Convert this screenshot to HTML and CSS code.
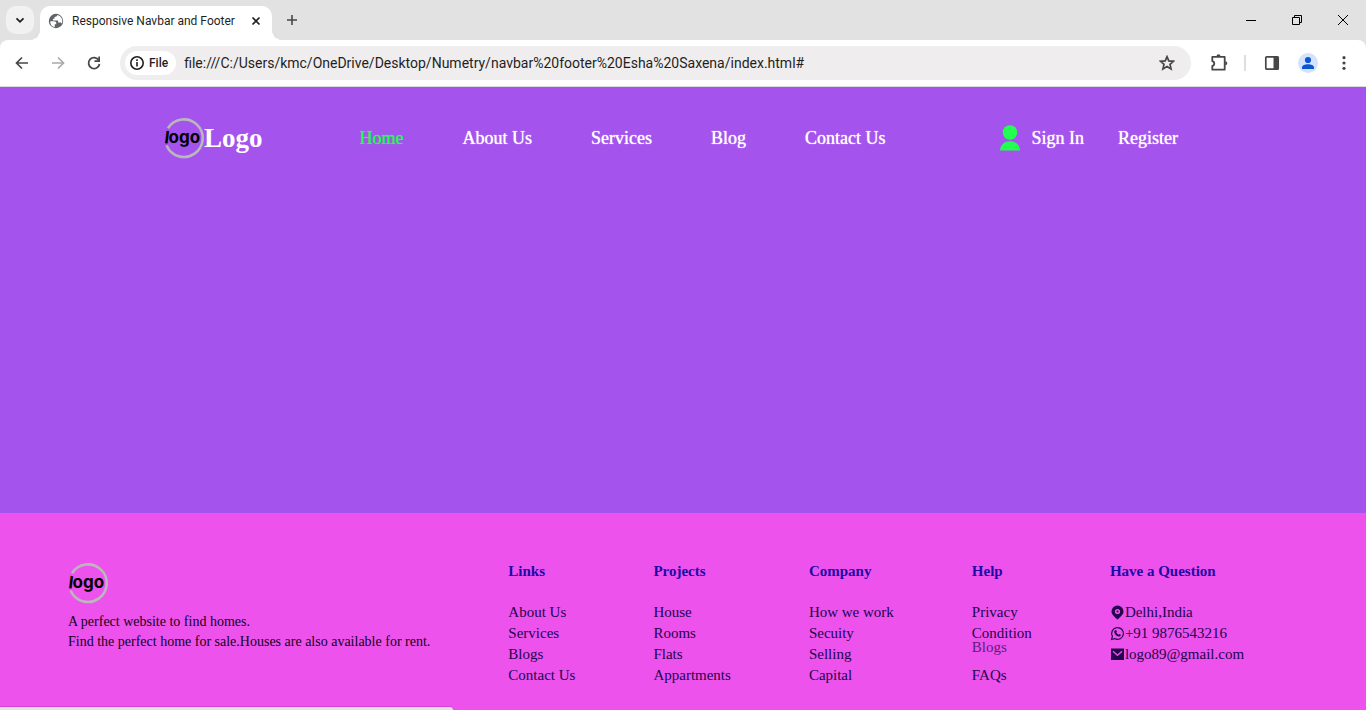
FILE: index.html
```html
<!DOCTYPE html>
<html lang="en">
<head>
<meta charset="utf-8">
<title>Responsive Navbar and Footer</title>
<link rel="stylesheet" href="styles.css">
</head>
<body>
<div class="tabstrip">
  <button class="tab-search" aria-label="Search tabs"><svg width="16" height="16" viewBox="0 0 16 16"><path d="M4.500 6.300 8 9.800l3.500-3.500" fill="none" stroke="#1f1f1f" stroke-width="1.800"/></svg></button>
  <div class="tab">
    <svg width="16" height="16" viewBox="0 0 16 16"><circle cx="8" cy="8" r="7.200" fill="#5f6368"/><path d="M2.300 8.300h3.400c1.800 0 2.600.9 2.600 2.200v.8H6.700v2.900C3.800 13.600 2 11 2.300 8.300zM9.300 2c-.3 1.700-1.300 1.800-2.800 1.900v1.900H4.900v1.700h5.200v2.100h2.100c1 0 1.300.5 1.400 1.200A6.100 6.100 0 0 0 9.300 2z" fill="#fff"/></svg>
    <span class="tab-title">Responsive Navbar and Footer</span>
    <button class="icon-btn tab-close" aria-label="Close tab"><svg width="16" height="16" viewBox="0 0 16 16"><path d="m4.500 4.500 7 7m0-7-7 7" stroke="#1f1f1f" stroke-width="1.700"/></svg></button>
  </div>
  <button class="icon-btn new-tab" aria-label="New tab"><svg width="16" height="16" viewBox="0 0 16 16"><path d="M8 3v10M3 8h10" stroke="#474747" stroke-width="1.600"/></svg></button>
  <div class="window-controls">
    <button class="icon-btn" aria-label="Minimize"><svg width="12" height="12" viewBox="0 0 12 12"><path d="M1 6.500h10" stroke="#000"/></svg></button>
    <button class="icon-btn" aria-label="Restore"><svg width="12" height="12" viewBox="0 0 12 12"><path d="M1.500 3.500h7v7h-7zM3.500 3.500v-2h7v7h-2" fill="none" stroke="#000"/></svg></button>
    <button class="icon-btn" aria-label="Close"><svg width="12" height="12" viewBox="0 0 12 12"><path d="m1 1 10 10M11 1 1 11" stroke="#000"/></svg></button>
  </div>
</div>

<div class="toolbar">
  <div class="history">
    <button class="icon-btn" aria-label="Back"><svg width="16" height="16" viewBox="0 0 16 16"><path d="M14 8H3.500M8 2.500 2.500 8 8 13.500" fill="none" stroke="#474747" stroke-width="1.700"/></svg></button>
    <button class="icon-btn" aria-label="Forward"><svg width="16" height="16" viewBox="0 0 16 16"><path d="M2 8h10.500M8 2.500 13.500 8 8 13.500" fill="none" stroke="#ababab" stroke-width="1.700"/></svg></button>
    <button class="icon-btn" aria-label="Reload"><svg width="16" height="16" viewBox="0 0 16 16"><path d="M12.800 5.200A5.500 5.500 0 1 0 13.500 9" fill="none" stroke="#474747" stroke-width="1.800"/><path d="M14 1.500V7H8.500V5.300h3.800V1.500z" fill="#474747"/></svg></button>
  </div>
  <div class="omnibox">
    <button class="file-chip"><svg width="16" height="16" viewBox="0 0 16 16"><circle cx="8" cy="8" r="6.200" fill="none" stroke="#1f1f1f" stroke-width="1.600"/><path d="M8 7v4.500M8 4.300v1.600" stroke="#1f1f1f" stroke-width="1.600"/></svg>File</button>
    <input class="url" aria-label="Address" value="file:///C:/Users/kmc/OneDrive/Desktop/Numetry/navbar%20footer%20Esha%20Saxena/index.html#">
    <button class="icon-btn" aria-label="Bookmark"><svg width="16" height="16" viewBox="0 0 16 16"><path d="m8 1.700 1.800 4.200 4.700.4-3.500 3.100 1.100 4.500L8 11.500l-4.100 2.400L5 9.400 1.500 6.300l4.700-.4z" fill="none" stroke="#474747" stroke-width="1.700"/></svg></button>
  </div>
  <div class="actions">
    <button class="icon-btn" aria-label="Extensions"><svg width="20" height="20" viewBox="0 0 20 20"><path d="M3.300 3.900h12.400v12.800H3.300v-3.700c2.600-.5 2.600-4.300 0-4.800z" fill="none" stroke="#474747" stroke-width="1.800" stroke-linejoin="round"/><path d="M7.500 3.300a2 2 0 0 1 4 0zM16.300 8.200a2 2 0 0 1 0 4z" fill="#474747"/></svg></button>
    <span class="divider"></span>
    <button class="icon-btn" aria-label="Side panel"><svg width="16" height="16" viewBox="0 0 16 16"><rect x="1.800" y="1.800" width="12.400" height="12.400" rx="1" fill="none" stroke="#474747" stroke-width="1.700"/><path d="M9.500 1.500h5v13h-5z" fill="#474747"/></svg></button>
    <button class="icon-btn" aria-label="Profile"><svg width="20" height="20" viewBox="0 0 20 20"><circle cx="10" cy="10" r="10" fill="#d3e3fd"/><circle cx="10" cy="7" r="3.100" fill="#0b57d0"/><path d="M4 16v-1.500C4 12.500 7 11.300 10 11.300s6 1.200 6 3.200V16z" fill="#0b57d0"/></svg></button>
    <button class="icon-btn" aria-label="Menu"><svg width="16" height="16" viewBox="0 0 16 16" fill="#474747"><circle cx="8" cy="2.700" r="1.600"/><circle cx="8" cy="8" r="1.600"/><circle cx="8" cy="13.300" r="1.600"/></svg></button>
  </div>
</div>

<div class="page">
  <header class="navbar">
    <a class="brand" href="#">
      <svg class="logo" viewBox="0 0 40 40"><path d="M4 10.200A18.800 18.800 0 1 1 2.600 27.400" fill="none" stroke="#b9b9bb" stroke-width="2.600"/><text class="logo-text" x="0" y="25" rotate="7 0 0 0">logo</text></svg>Logo
    </a>
    <nav class="nav-links">
      <a class="active" href="#">Home</a>
      <a href="#">About Us</a>
      <a href="#">Services</a>
      <a href="#">Blog</a>
      <a href="#">Contact Us</a>
    </nav>
    <div class="account">
      <a class="sign-in" href="#"><svg width="20" height="26" viewBox="0 0 20 26" fill="#22ff50"><circle cx="10" cy="7.500" r="7.300"/><path d="M0 25.500c0-5 4-9.300 10-9.300s10 4.300 10 9.300z"/></svg>Sign In</a>
      <a href="#">Register</a>
    </div>
  </header>

  <footer class="footer">
    <div class="about">
      <svg class="logo" viewBox="0 0 40 40"><path d="M4 10.200A18.800 18.800 0 1 1 2.600 27.400" fill="none" stroke="#b9b9bb" stroke-width="2.600"/><text class="logo-text" x="0" y="25" rotate="7 0 0 0">logo</text></svg>
      <p>A perfect website to find homes.<br>Find the perfect home for sale.Houses are also available for rent.</p>
    </div>
    <section>
      <h4>Links</h4>
      <ul>
        <li><a href="#">About Us</a></li>
        <li><a href="#">Services</a></li>
        <li><a href="#">Blogs</a></li>
        <li><a href="#">Contact Us</a></li>
      </ul>
    </section>
    <section>
      <h4>Projects</h4>
      <ul>
        <li><a href="#">House</a></li>
        <li><a href="#">Rooms</a></li>
        <li><a href="#">Flats</a></li>
        <li><a href="#">Appartments</a></li>
      </ul>
    </section>
    <section>
      <h4>Company</h4>
      <ul>
        <li><a href="#">How we work</a></li>
        <li><a href="#">Secuity</a></li>
        <li><a href="#">Selling</a></li>
        <li><a href="#">Capital</a></li>
      </ul>
    </section>
    <section>
      <h4>Help</h4>
      <ul>
        <li><a href="#">Privacy</a></li>
        <li><a href="#">Condition</a></li>
        <li class="raised"><a href="#">Blogs</a></li>
        <li><a href="#">FAQs</a></li>
      </ul>
    </section>
    <section>
      <h4>Have a Question</h4>
      <ul>
        <li><a class="contact" href="#"><svg width="15" height="15" viewBox="0 0 15 15"><path fill-rule="evenodd" d="M7.500.5a6 6 0 0 1 6 6c0 3.200-3.500 5.700-6 8-2.500-2.300-6-4.800-6-8a6 6 0 0 1 6-6zm0 3.400a2.600 2.600 0 1 0 0 5.200 2.600 2.600 0 0 0 0-5.200z"/><circle cx="7.500" cy="6.500" r="1"/></svg>Delhi,India</a></li>
        <li><a class="contact" href="#"><svg width="15" height="15" viewBox="0 0 15 15"><path d="M1.500 13.500l.9-3.200a5.900 5.900 0 1 1 2.300 2.300z" fill="none" stroke="#23064e" stroke-width="1.200"/><path d="M5.300 4.200l1 .1.600 1.500-.6.800c.5 1 1.200 1.600 2.200 2.100l.8-.8 1.500.8c0 1.200-.8 1.900-1.900 1.800C6.500 10.200 4.500 8.200 4.200 6c0-.9.500-1.600 1.100-1.800z"/></svg>+91 9876543216</a></li>
        <li><a class="contact" href="#"><svg width="15" height="15" viewBox="0 0 15 15"><path d="M1 1.500h13v11.500H1z"/><path d="m3 4.300 4.500 4 4.500-4" fill="none" stroke="#ed52ed" stroke-width="1.400"/></svg>logo89@gmail.com</a></li>
      </ul>
    </section>
  </footer>
  <div class="status-bubble"></div>
</div>
</body>
</html>
```

FILE: styles.css
```css
* { box-sizing: border-box; }
body {
  margin: 0;
  min-height: 100vh;
  display: flex;
  flex-direction: column;
  background: #e2e2e2;
  font-family: "Liberation Serif", "Times New Roman", serif;
}
a { color: inherit; text-decoration: none; }
svg { display: block; flex: none; }
button { font: inherit; border: 0; padding: 0; background: none; }

/* browser window */
.tabstrip, .toolbar {
  display: flex;
  align-items: center;
  font-family: Roboto, "Segoe UI", sans-serif;
  color: #1f1f1f;
}
.icon-btn { display: grid; place-items: center; flex: none; }
.tabstrip { height: 40px; padding-left: 6px; }
.tab-search {
  width: 28px; height: 28px;
  display: grid; place-items: center;
  border-radius: 10px;
  background: #f1f1f1;
}
.tab {
  position: relative;
  display: flex;
  align-items: center;
  align-self: flex-end;
  gap: 8px;
  width: 232px; height: 34px;
  margin-left: 6px;
  padding: 0 8px 5px;
  border-radius: 10px 10px 0 0;
  background: #fff;
}
.tab::before, .tab::after {
  content: "";
  position: absolute;
  bottom: 0;
  width: 10px; height: 10px;
}
.tab::before { right: 100%; background: radial-gradient(circle at 0 0, transparent 10px, #fff 10px); }
.tab::after { left: 100%; background: radial-gradient(circle at 100% 0, transparent 10px, #fff 10px); }
.tab-title { flex: 1; font-size: 12px; white-space: nowrap; }
.new-tab { margin-left: 12px; }
.window-controls { display: flex; margin-left: auto; }
.window-controls .icon-btn { width: 46px; height: 40px; }

.toolbar {
  height: 47px;
  padding: 0 14px;
  gap: 18px;
  background: #fff;
  border-bottom: 1px solid #dcdcdc;
  border-radius: 8px 8px 0 0;
}
.history { display: flex; gap: 20px; }
.omnibox {
  flex: 1;
  display: flex;
  align-items: center;
  height: 34px;
  padding: 0 16px 0 5px;
  border-radius: 17px;
  background: #efedee;
}
.file-chip {
  display: flex;
  align-items: center;
  gap: 4px;
  height: 24px;
  padding: 0 8px 0 4px;
  border-radius: 12px;
  background: #fff;
  font-size: 12px;
  font-weight: 500;
  color: #1f1f1f;
}
.url {
  flex: 1;
  min-width: 0;
  margin-left: 8px;
  padding: 0;
  border: 0;
  background: none;
  font: 14px Roboto, "Segoe UI", sans-serif;
  color: #1f1f1f;
}
.actions { display: flex; align-items: center; gap: 18px; }
.divider { width: 2px; height: 16px; margin-left: -3px; background: #dedede; }

/* page */
.page {
  position: relative;
  flex: 1;
  display: flex;
  flex-direction: column;
  background: #a453ed;
}
.logo { width: 40px; height: 40px; overflow: visible; }
.logo-text { font: bold 17px Inter, sans-serif; fill: #000; }
.navbar {
  display: flex;
  align-items: center;
  height: 102px;
  padding: 0 188px 0 164px;
  font-size: 18px;
  color: #fff;
  text-shadow: 0 0 1px currentColor;
}
.brand {
  display: flex;
  align-items: center;
  margin-right: 97px;
  font-size: 27px;
  font-weight: bold;
  text-shadow: none;
}
.nav-links { display: flex; gap: 59px; }
.nav-links .active { color: #22ff50; }
.account { display: flex; align-items: center; gap: 34px; margin-left: auto; }
.sign-in { display: flex; align-items: center; gap: 11px; }

.footer {
  display: flex;
  gap: 78px;
  margin-top: auto;
  padding: 48px 68px 24px;
  background: #ed52ed;
  font-size: 15px;
  line-height: 21px;
  color: #23064e;
  white-space: nowrap;
}
.about { padding-top: 2px; }
.about p {
  margin: 9px 0 0;
  font-size: 14px;
  line-height: 20px;
  color: #10041c;
}
.footer h4 {
  margin: 0 0 20px;
  font-size: 15px;
  color: #1a0aa8;
}
.footer ul { margin: 0; padding: 0; list-style: none; }
.raised { margin: -7px 0 7px; opacity: .7; }
.contact { display: flex; align-items: center; }
.contact svg { fill: #23064e; }
.status-bubble {
  position: absolute;
  left: 0; bottom: 0;
  width: 453px; height: 3px;
  border-radius: 0 3px 0 0;
  background: #e2e2e2;
  box-shadow: 0 -1px 0 #d346d3;
}
```
